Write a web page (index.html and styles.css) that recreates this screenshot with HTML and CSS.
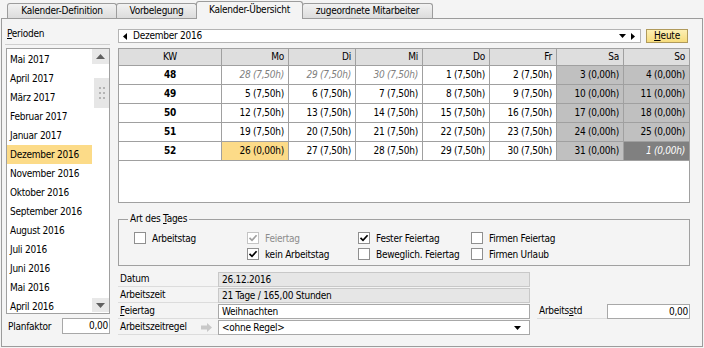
FILE: index.html
```html
<!DOCTYPE html>
<html lang="de">
<head>
<meta charset="utf-8">
<title>Kalender-Übersicht</title>
<link rel="stylesheet" href="styles.css">
</head>
<body>
<div class="tabs">
  <div class="tab t1">Kalender-Definition</div>
  <div class="tab t2">Vorbelegung</div>
  <div class="tab t3 active">Kalender-Übersicht</div>
  <div class="tab t4">zugeordnete Mitarbeiter</div>
</div>
<div class="panel">
  <div class="left">
    <div class="phead"><u>P</u>erioden</div>
    <div class="list">
      <ul class="items">
        <li>Mai 2017</li>
        <li>April 2017</li>
        <li>März 2017</li>
        <li>Februar 2017</li>
        <li>Januar 2017</li>
        <li class="sel">Dezember 2016</li>
        <li>November 2016</li>
        <li>Oktober 2016</li>
        <li>September 2016</li>
        <li>August 2016</li>
        <li>Juli 2016</li>
        <li>Juni 2016</li>
        <li>Mai 2016</li>
        <li>April 2016</li>
      </ul>
      <div class="vscroll">
        <div class="sbtn up"><svg width="9" height="5" viewBox="0 0 9 5"><polygon points="0,5 4.5,0 9,5" fill="#606060"/></svg></div>
        <div class="gap"></div>
        <div class="thumb"><svg width="6" height="12" viewBox="0 0 6 12"><g fill="#b4b4b4"><rect x="0" y="0" width="2" height="2"/><rect x="4" y="0" width="2" height="2"/><rect x="0" y="5" width="2" height="2"/><rect x="4" y="5" width="2" height="2"/><rect x="0" y="10" width="2" height="2"/><rect x="4" y="10" width="2" height="2"/></g></svg></div>
        <div class="track"></div>
        <div class="sbtn down"><svg width="9" height="5" viewBox="0 0 9 5"><polygon points="0,0 9,0 4.5,5" fill="#606060"/></svg></div>
      </div>
    </div>
    <div class="planrow">
      <span class="plabel">Planfaktor</span>
      <div class="inp num">0,00</div>
    </div>
  </div>

  <div class="right">
    <div class="monthrow">
      <div class="combo">
        <svg class="tri-l" width="4" height="7" viewBox="0 0 4 7"><polygon points="4,0 0,3.5 4,7" fill="#000"/></svg>
        <span class="ctext">Dezember 2016</span>
        <svg class="tri-d" width="7" height="4" viewBox="0 0 7 4"><polygon points="0,0 7,0 3.5,4" fill="#000"/></svg>
        <svg class="tri-r" width="4" height="7" viewBox="0 0 4 7"><polygon points="0,0 4,3.5 0,7" fill="#000"/></svg>
      </div>
      <div class="heute"><u>H</u>eute</div>
    </div>

    <div class="cal">
      <div class="grid">
        <div class="h kw">KW</div><div class="h">Mo</div><div class="h">Di</div><div class="h">Mi</div><div class="h">Do</div><div class="h">Fr</div><div class="h">Sa</div><div class="h last">So</div>

        <div class="c kw">48</div><div class="c out">28 (7,50h)</div><div class="c out">29 (7,50h)</div><div class="c out">30 (7,50h)</div><div class="c">1 (7,50h)</div><div class="c">2 (7,50h)</div><div class="c we">3 (0,00h)</div><div class="c we last">4 (0,00h)</div>

        <div class="c kw">49</div><div class="c">5 (7,50h)</div><div class="c">6 (7,50h)</div><div class="c">7 (7,50h)</div><div class="c">8 (7,50h)</div><div class="c">9 (7,50h)</div><div class="c we">10 (0,00h)</div><div class="c we last">11 (0,00h)</div>

        <div class="c kw">50</div><div class="c">12 (7,50h)</div><div class="c">13 (7,50h)</div><div class="c">14 (7,50h)</div><div class="c">15 (7,50h)</div><div class="c">16 (7,50h)</div><div class="c we">17 (0,00h)</div><div class="c we last">18 (0,00h)</div>

        <div class="c kw">51</div><div class="c">19 (7,50h)</div><div class="c">20 (7,50h)</div><div class="c">21 (7,50h)</div><div class="c">22 (7,50h)</div><div class="c">23 (7,50h)</div><div class="c we">24 (0,00h)</div><div class="c we last">25 (0,00h)</div>

        <div class="c kw">52</div><div class="c today">26 (0,00h)</div><div class="c">27 (7,50h)</div><div class="c">28 (7,50h)</div><div class="c">29 (7,50h)</div><div class="c">30 (7,50h)</div><div class="c we">31 (0,00h)</div><div class="c dark last">1 (0,00h)</div>
      </div>
    </div>

    <fieldset class="group">
      <legend>Art des <u>T</u>ages</legend>
      <div class="checks">
        <label class="chk"><span class="cb"></span>Arbeitstag</label>
        <label class="chk dis"><span class="cb"><svg width="10" height="10" viewBox="0 0 10 10"><path d="M1.5 4.8 L4 7.3 L8.6 2.2" fill="none" stroke="#a0a0a0" stroke-width="1.7"/></svg></span>Feiertag</label>
        <label class="chk"><span class="cb"><svg width="10" height="10" viewBox="0 0 10 10"><path d="M1.5 4.8 L4 7.3 L8.6 2.2" fill="none" stroke="#000" stroke-width="1.7"/></svg></span>Fester Feiertag</label>
        <label class="chk"><span class="cb"></span>Firmen Feiertag</label>

        <span class="empty"></span>
        <label class="chk"><span class="cb"><svg width="10" height="10" viewBox="0 0 10 10"><path d="M1.5 4.8 L4 7.3 L8.6 2.2" fill="none" stroke="#000" stroke-width="1.7"/></svg></span>kein Arbeitstag</label>
        <label class="chk"><span class="cb"></span>Beweglich. Feiertag</label>
        <label class="chk"><span class="cb"></span>Firmen Urlaub</label>
      </div>
    </fieldset>

    <div class="fields">
      <div class="lbl">Datum</div>
      <div class="fld ro">26.12.2016</div>
      <div class="sp"></div><div class="sp"></div><div class="sp"></div>

      <div class="lbl">Arbeitszeit</div>
      <div class="fld ro">21 Tage / 165,00 Stunden</div>
      <div class="sp"></div><div class="sp"></div><div class="sp"></div>

      <div class="lbl"><span><u>F</u>eiertag</span></div>
      <div class="fld">Weihnachten</div>
      <div class="sp"></div>
      <div class="lbl">Arbeits<u>s</u>td</div>
      <div class="fld num">0,00</div>

      <div class="lbl"><span>Arbeitszeitregel</span><svg class="arrow" width="11" height="9" viewBox="0 0 11 9"><polygon points="0,2.5 6,2.5 6,0 11,4.5 6,9 6,6.5 0,6.5" fill="#c8c8c8"/></svg></div>
      <div class="fld combo2"><span>&lt;ohne Regel&gt;</span><svg width="7" height="4" viewBox="0 0 7 4"><polygon points="0,0 7,0 3.5,4" fill="#000"/></svg></div>
      <div class="sp"></div><div class="sp"></div><div class="sp"></div>
    </div>
  </div>
</div>
</body>
</html>
```

FILE: styles.css
```css
* { box-sizing: border-box; }
html, body { margin: 0; padding: 0; }
body {
  width: 704px;
  height: 348px;
  overflow: hidden;
  background: #f4f4f4;
  font-family: "DejaVu Sans Condensed", "DejaVu Sans", sans-serif;
  font-size: 10px;
  letter-spacing: -0.25px;
  color: #000;
}
u { text-decoration: underline; }

/* tabs */
.tabs {
  display: flex;
  align-items: flex-end;
  height: 18px;
  padding-left: 7px;
}
.tab {
  height: 15px;
  border: 1px solid #9c9c9c;
  border-bottom: none;
  border-radius: 3px 3px 0 0;
  background: linear-gradient(#f2f2f2, #dcdcdc);
  text-align: center;
  line-height: 14px;
  margin-right: -1px;
  white-space: nowrap;
}
.t1 { width: 110px; }
.t2 { width: 81px; }
.t3 { width: 107px; }
.t4 { width: 131px; }
.tab.active {
  height: 18px;
  margin-bottom: -1px;
  background: #f4f4f4;
  position: relative;
  z-index: 1;
  line-height: 16px;
}

/* panel */
.panel {
  margin: 0 1px;
  height: 329px;
  border: 1px solid #9c9c9c;
  display: flex;
  gap: 8px;
  padding: 0 12px 0 4px;
}

/* left column */
.left {
  width: 104px;
  display: flex;
  flex-direction: column;
}
.phead {
  height: 26px;
  padding: 8px 0 0 2px;
  line-height: 14px;
  border-bottom: 1px solid #cfcfcf;
  margin-left: -1px;
}
.list {
  margin-top: 3px;
  height: 266px;
  border: 1px solid #a0a0a0;
  background: #fff;
  display: flex;
}
.items {
  flex: 1;
  list-style: none;
  margin: 0;
  padding: 1px 0 0 0;
  overflow: hidden;
}
.items li {
  height: 19px;
  line-height: 19px;
  padding-left: 3px;
  white-space: nowrap;
}
.items li.sel { background: #fcdb88; }
.vscroll {
  width: 17px;
  display: flex;
  flex-direction: column;
  background: #fff;
}
.sbtn {
  height: 15px;
  background: #e8e8e8;
  display: flex;
  align-items: center;
  justify-content: center;
}
.sbtn.down { height: 14px; margin-bottom: 1px; }
.gap { height: 14px; }
.thumb {
  height: 30px;
  margin-left: 2px;
  background: #e6e6e6;
  display: flex;
  align-items: center;
  justify-content: center;
}
.track { flex: 1; }
.planrow {
  margin-top: 4px;
  height: 16px;
  display: flex;
  align-items: center;
}
.plabel { padding-left: 2px; }
.inp {
  margin-left: auto;
  width: 48px;
  height: 16px;
  border: 1px solid #a8a8a8;
  background: #fff;
  line-height: 14px;
}
.num { text-align: right; padding-right: 1px; }

/* right column */
.right {
  width: 572px;
  display: flex;
  flex-direction: column;
}
.monthrow {
  margin-top: 10px;
  height: 14px;
  display: flex;
  gap: 5px;
}
.combo {
  flex: 1;
  border: 1px solid #b4b4b4;
  background: #fff;
  display: flex;
  align-items: center;
  padding: 0 5px 0 4px;
}
.ctext { margin-left: 6px; line-height: 12px; }
.tri-d { margin-left: auto; }
.tri-r { margin-left: 5px; }
.heute {
  width: 42px;
  margin-right: 2px;
  border: 1px solid #b09a5c;
  background: linear-gradient(#fdefb4, #f7dc7c);
  text-align: center;
  line-height: 12px;
}

.cal {
  margin-top: 5px;
  height: 155px;
  border: 1px solid #a0a0a0;
  background: #fff;
}
.grid {
  display: grid;
  grid-template-columns: 103px repeat(6, 67px) 65px;
  grid-template-rows: 17px repeat(5, 19px);
}
.h, .c {
  border-right: 1px solid #a0a0a0;
  border-bottom: 1px solid #a0a0a0;
  text-align: right;
  padding-right: 4px;
  white-space: nowrap;
}
.h {
  background: #dedede;
  line-height: 16px;
}
.c { line-height: 18px; }
.last { border-right: none; }
.kw { text-align: center; padding-right: 0; }
.c.kw { font-weight: bold; }
.out { color: #808080; font-style: italic; }
.we { background: #c0c0c0; }
.today { background: #fcdb88; }
.dark { background: #808080; color: #fff; font-style: italic; }

/* group box */
.group {
  margin: 9px 0 0 0;
  padding: 4px 0 3px 15px;
  border: 1px solid #a0a0a0;
  min-width: 0;
}
.group legend {
  margin-left: -6px;
  padding: 0 2px;
  line-height: 14px;
}
.checks {
  display: grid;
  grid-template-columns: 113px 111px 113px auto;
  grid-auto-rows: 16px;
}
.chk {
  display: flex;
  align-items: center;
  gap: 6px;
  white-space: nowrap;
}
.cb {
  width: 12px;
  height: 12px;
  border: 1px solid #8f8f8f;
  background: #fff;
  display: flex;
  align-items: center;
  justify-content: center;
}
.chk.dis { color: #8c8c8c; }
.chk.dis .cb { border-color: #c4c4c4; }

/* fields */
.fields {
  margin-top: 6px;
  display: grid;
  grid-template-columns: 100px 312px 7px 70px 83px;
  grid-template-rows: repeat(4, 16px);
}
.lbl {
  height: 15px;
  border-bottom: 1px solid #dcdcdc;
  padding-left: 2px;
  line-height: 14px;
  display: flex;
  align-items: center;
  white-space: nowrap;
}
.arrow { margin-left: auto; margin-right: 6px; }
.fld {
  height: 15px;
  border: 1px solid #a8a8a8;
  background: #fff;
  padding-left: 3px;
  line-height: 13px;
  white-space: nowrap;
}
.fld.ro {
  background: #e6e6e6;
  border-color: #c8c8c8;
}
.fld.num { text-align: right; padding-right: 1px; }
.combo2 {
  display: flex;
  align-items: center;
  justify-content: space-between;
  padding-right: 8px;
}
```
